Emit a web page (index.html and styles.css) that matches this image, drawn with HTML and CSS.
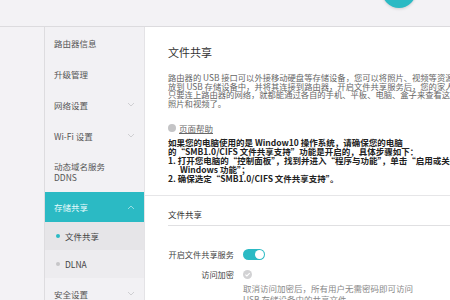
FILE: index.html
```html
<!DOCTYPE html>
<html lang="zh-CN">
<head>
    <meta charset="UTF-8">
    <title>文件共享</title>
    <link rel="stylesheet" href="styles.css">
</head>
<body>
    <div class="topbar">
        <div class="avatar"></div>
    </div>

    <div class="main">
        <div class="sidebar">
            <div class="menu-item">路由器信息</div>
            <div class="menu-item">升级管理</div>
            <div class="menu-item">网络设置
                <svg class="chev" width="8" height="5" viewBox="0 0 8 5"><path d="M1 1l3 3 3-3" /></svg>
            </div>
            <div class="menu-item">Wi-Fi 设置
                <svg class="chev" width="8" height="5" viewBox="0 0 8 5"><path d="M1 1l3 3 3-3" /></svg>
            </div>
            <div class="menu-item tall">动态域名服务<br>DDNS</div>
            <div class="menu-item active">存储共享
                <svg class="chev" width="8" height="5" viewBox="0 0 8 5"><path d="M1 4l3-3 3 3" /></svg>
            </div>
            <div class="sub-item current"><span class="dot"></span>文件共享</div>
            <div class="sub-item"><span class="dot"></span>DLNA</div>
            <div class="menu-item">安全设置
                <svg class="chev" width="8" height="5" viewBox="0 0 8 5"><path d="M1 1l3 3 3-3" /></svg>
            </div>
        </div>

        <div class="content">
            <div class="section">
                <h1>文件共享</h1>
                <p class="intro">
                    路由器的 USB 接口可以外接移动硬盘等存储设备，您可以将照片、视频等资源<br>
                    放到 USB 存储设备中，并将其连接到路由器，开启文件共享服务后，您的家人<br>
                    只要连上路由器的网络，就都能通过各自的手机、平板、电脑、盒子来查看这些<br>
                    照片和视频了。
                </p>
                <div class="help"><span class="help-icon"></span><a href="#">页面帮助</a></div>
                <div class="notice">
                    如果您的电脑使用的是 Window10 操作系统，请确保您的电脑<br>
                    的“SMB1.0/CIFS 文件共享支持”功能是开启的，具体步骤如下：<br>
                    1. 打开您电脑的“控制面板”，找到并进入“程序与功能”，单击“启用或关闭<br>
                    <span class="indent">Windows 功能”；</span><br>
                    2. 确保选定“SMB1.0/CIFS 文件共享支持”。
                </div>
            </div>

            <div class="section settings">
                <h2>文件共享</h2>
                <div class="row">
                    <span class="label">开启文件共享服务</span>
                    <span class="toggle"><span class="knob"></span></span>
                </div>
                <div class="row">
                    <span class="label">访问加密</span>
                    <svg class="check" width="9" height="9" viewBox="0 0 9 9">
                        <circle cx="4.5" cy="4.5" r="4.5" fill="#d2d2d4" />
                        <path d="M2.4 4.6l1.5 1.4 2.8-2.9" fill="none" stroke="#fff" stroke-width="1.1" />
                    </svg>
                </div>
                <p class="desc">
                    取消访问加密后，所有用户无需密码即可访问<br>
                    USB 存储设备中的共享文件
                </p>
            </div>
        </div>
    </div>
</body>
</html>
```

FILE: styles.css
```css
body {
    margin: 0;
    width: 450px;
    height: 300px;
    overflow: hidden;
    background-color: #f3f2f5;
    font-family: "Noto Sans CJK SC", "Noto Sans", sans-serif;
    color: #333;
}
.topbar {
    position: relative;
    height: 26px;
    border-bottom: 1px solid #dcdbde;
}
.avatar {
    position: absolute;
    left: 382px;
    top: -26px;
    width: 34px;
    height: 34px;
    border-radius: 50%;
    background-color: #2bbac4;
    box-shadow: 0 1px 3px rgba(0, 0, 0, 0.15);
}
.main {
    display: flex;
    padding-left: 44px;
    height: 273px;
    overflow: hidden;
}
.sidebar {
    width: 99px;
    flex-shrink: 0;
    background-color: #f2f1f4;
    border-left: 1px solid #dddcdf;
    border-right: 1px solid #e4e3e6;
}
.menu-item {
    height: 31px;
    display: flex;
    align-items: center;
    justify-content: space-between;
    padding: 0 9px 0 9px;
    font-size: 8.5px;
    color: #555;
}
.menu-item.tall {
    height: 41px;
    line-height: 11px;
}
.menu-item.active {
    height: 30px;
    background-color: #2bbac4;
    color: #e8fbfc;
}
.chev {
    fill: none;
    stroke: #cfcfd2;
    stroke-width: 1;
}
.active .chev {
    stroke: rgba(255, 255, 255, 0.5);
}
.sub-item {
    height: 28px;
    display: flex;
    align-items: center;
    gap: 5px;
    padding-left: 11px;
    font-size: 8.5px;
    color: #444;
    background-color: #edecef;
}
.sub-item.current {
    background-color: #e6e5e8;
}
.sub-item:last-of-type {
    border-bottom: 1px solid #e0dfe2;
}
.dot {
    width: 4px;
    height: 4px;
    border-radius: 50%;
    background-color: #c6c6c8;
}
.current .dot {
    background-color: #2bbac4;
}
.content {
    flex: 1;
    min-width: 320px;
    background-color: #fff;
    overflow: hidden;
}
.section {
    padding-left: 23px;
}
.section:first-child {
    padding-bottom: 12px;
    border-bottom: 1px solid #e6e6e8;
}
h1 {
    margin: 18px 0 0 0;
    font-size: 11px;
    line-height: 14px;
    font-weight: normal;
    color: #333;
}
.intro {
    margin: 14px 0 0 0;
    font-size: 8.3px;
    line-height: 8.5px;
    color: #666;
    white-space: nowrap;
}
.help {
    margin-top: 16px;
    height: 10px;
    display: flex;
    align-items: center;
    gap: 3px;
    font-size: 8.5px;
}
.help a {
    color: #666;
}
.help-icon {
    width: 8px;
    height: 8px;
    border-radius: 50%;
    background-color: #c4c4c6;
}
.notice {
    margin-top: 5px;
    font-size: 8.5px;
    line-height: 9px;
    font-weight: bold;
    color: #222;
    white-space: nowrap;
}
.indent {
    padding-left: 12px;
}
.settings h2 {
    margin: 12px 0 0 0;
    padding-bottom: 5px;
    font-size: 8.5px;
    line-height: 12px;
    font-weight: normal;
    color: #333;
    border-bottom: 1px solid #e0e0e2;
}
.row {
    display: flex;
    align-items: center;
    gap: 9px;
    height: 14px;
    margin-top: 21px;
}
.row + .row {
    margin-top: 6px;
}
.label {
    width: 66px;
    text-align: right;
    font-size: 8.2px;
    white-space: nowrap;
    color: #444;
}
.toggle {
    width: 22px;
    height: 11px;
    border-radius: 6px;
    background-color: #2bbac4;
    display: flex;
    align-items: center;
    justify-content: flex-end;
    padding-right: 1px;
    box-sizing: border-box;
}
.knob {
    width: 9px;
    height: 9px;
    border-radius: 50%;
    background-color: #fff;
}
.desc {
    margin: 2px 0 0 75px;
    font-size: 8.5px;
    line-height: 11px;
    color: #888;
    white-space: nowrap;
}
```
